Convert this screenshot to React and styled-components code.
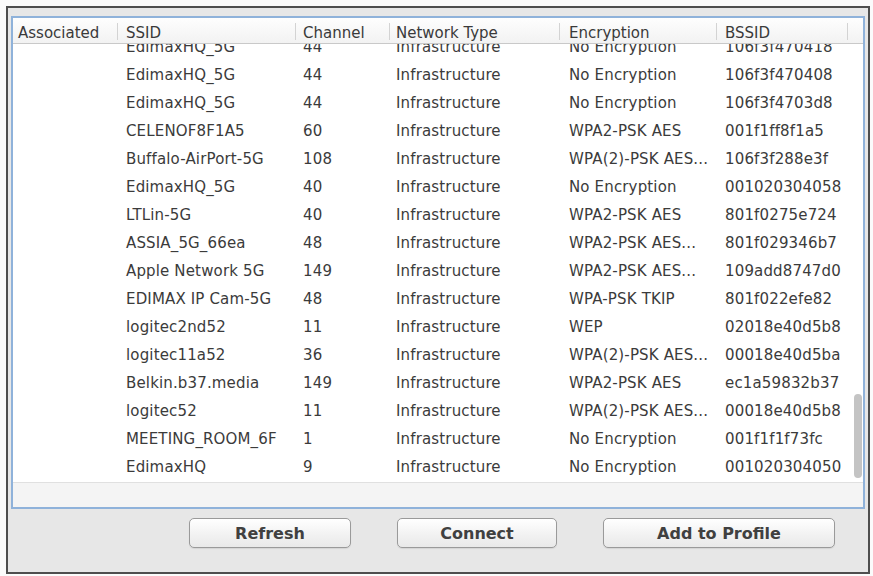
import React from "react"
import styled, {createGlobalStyle} from 'styled-components'

const Global = createGlobalStyle`
  html, body {
    margin: 0;
    padding: 0;
    background: #fbfbfb;
  }
  body {
    font-family: "DejaVu Sans", "Liberation Sans", sans-serif;
  }
`

const columns = [
    {key: 'assoc', title: 'Associated', width: 105, pad: 5},
    {key: 'ssid', title: 'SSID', width: 178, pad: 8},
    {key: 'channel', title: 'Channel', width: 94, pad: 7},
    {key: 'type', title: 'Network Type', width: 170, pad: 6},
    {key: 'enc', title: 'Encryption', width: 157, pad: 9},
    {key: 'bssid', title: 'BSSID', width: 131, pad: 8},
]

const networks = [
    ['EdimaxHQ_5G', '44', 'Infrastructure', 'No Encryption', '106f3f470418'],
    ['EdimaxHQ_5G', '44', 'Infrastructure', 'No Encryption', '106f3f470408'],
    ['EdimaxHQ_5G', '44', 'Infrastructure', 'No Encryption', '106f3f4703d8'],
    ['CELENOF8F1A5', '60', 'Infrastructure', 'WPA2-PSK AES', '001f1ff8f1a5'],
    ['Buffalo-AirPort-5G', '108', 'Infrastructure', 'WPA(2)-PSK AES...', '106f3f288e3f'],
    ['EdimaxHQ_5G', '40', 'Infrastructure', 'No Encryption', '001020304058'],
    ['LTLin-5G', '40', 'Infrastructure', 'WPA2-PSK AES', '801f0275e724'],
    ['ASSIA_5G_66ea', '48', 'Infrastructure', 'WPA2-PSK AES...', '801f029346b7'],
    ['Apple Network 5G', '149', 'Infrastructure', 'WPA2-PSK AES...', '109add8747d0'],
    ['EDIMAX IP Cam-5G', '48', 'Infrastructure', 'WPA-PSK TKIP', '801f022efe82'],
    ['logitec2nd52', '11', 'Infrastructure', 'WEP', '02018e40d5b8'],
    ['logitec11a52', '36', 'Infrastructure', 'WPA(2)-PSK AES...', '00018e40d5ba'],
    ['Belkin.b37.media', '149', 'Infrastructure', 'WPA2-PSK AES', 'ec1a59832b37'],
    ['logitec52', '11', 'Infrastructure', 'WPA(2)-PSK AES...', '00018e40d5b8'],
    ['MEETING_ROOM_6F', '1', 'Infrastructure', 'No Encryption', '001f1f1f73fc'],
    ['EdimaxHQ', '9', 'Infrastructure', 'No Encryption', '001020304050'],
]

const Window = styled.div`
  box-sizing: border-box;
  width: 864px;
  height: 568px;
  margin: 6px 0 0 6px;
  border: 2px solid #4e4e4e;
  background: #e7e7e7;
  padding: 8px 3px 0 3px;
  display: flex;
  flex-direction: column;
`

const Frame = styled.div`
  box-sizing: border-box;
  height: 493px;
  border: 2px solid #8fb2da;
  background: #f4f4f4;
  display: flex;
  flex-direction: column;
`

const Header = styled.div`
  display: flex;
  height: 26px;
  background: linear-gradient(#fefefe, #f2f2f2);
  border-bottom: 1px solid #c9c9c9;
  box-sizing: border-box;
`

const HeadCell = styled.div`
  position: relative;
  width: ${p => p.w}px;
  flex: none;
  box-sizing: border-box;
  padding: 6px 0 0 ${p => p.pad}px;
  font-size: 15px;
  color: #3a3a3a;
  white-space: nowrap;
  &::after {
    content: "";
    position: absolute;
    right: 0;
    top: 5px;
    bottom: 3px;
    width: 1px;
    background: #d3d3d3;
  }
`

const Body = styled.div`
  display: flex;
  height: 438px;
  background: #fff;
  border-bottom: 1px solid #e0e0e0;
`

const Rows = styled.div`
  width: 835px;
  overflow: hidden;
`

const RowsInner = styled.div`
  margin-top: -11px;
`

const Row = styled.div`
  display: flex;
  height: 28px;
  align-items: center;
`

const Cell = styled.div`
  width: ${p => p.w}px;
  flex: none;
  box-sizing: border-box;
  padding-left: ${p => p.pad}px;
  font-size: 15px;
  letter-spacing: 0.15px;
  color: #3b3b3b;
  white-space: nowrap;
`

const ScrollTrack = styled.div`
  flex: 1;
  display: flex;
  flex-direction: column;
  justify-content: flex-end;
  align-items: center;
  padding-bottom: 4px;
`

const Thumb = styled.div`
  width: 8px;
  height: 84px;
  border-radius: 4px;
  background: #c4c4c4;
  margin-left: 4px;
`

const Buttons = styled.div`
  display: flex;
  gap: 46px;
  padding: 9px 0 0 178px;
`

const Button = styled.button`
  width: ${p => p.w}px;
  height: 30px;
  border: 1px solid #9a9a9a;
  border-radius: 5px;
  background: linear-gradient(#ffffff, #f1f1f1 60%, #e9e9e9);
  font-family: "DejaVu Sans", "Liberation Sans", sans-serif;
  font-size: 16px;
  font-weight: bold;
  color: #404040;
  padding: 0;
  box-shadow: 0 1px 1px rgba(0, 0, 0, 0.08);
`

export default function App() {
    return (
        <>
            <Global/>
            <Window>
                <Frame>
                    <Header>
                        {columns.map(c => (
                            <HeadCell key={c.key} w={c.width} pad={c.pad}>{c.title}</HeadCell>
                        ))}
                    </Header>
                    <Body>
                        <Rows>
                            <RowsInner>
                                {networks.map((n, i) => (
                                    <Row key={i}>
                                        <Cell w={columns[0].width} pad={columns[0].pad}/>
                                        {n.map((v, j) => (
                                            <Cell key={j} w={columns[j + 1].width} pad={columns[j + 1].pad}>{v}</Cell>
                                        ))}
                                    </Row>
                                ))}
                            </RowsInner>
                        </Rows>
                        <ScrollTrack>
                            <Thumb/>
                        </ScrollTrack>
                    </Body>
                </Frame>
                <Buttons>
                    <Button w={162}>Refresh</Button>
                    <Button w={160}>Connect</Button>
                    <Button w={232}>Add to Profile</Button>
                </Buttons>
            </Window>
        </>
    )
}
